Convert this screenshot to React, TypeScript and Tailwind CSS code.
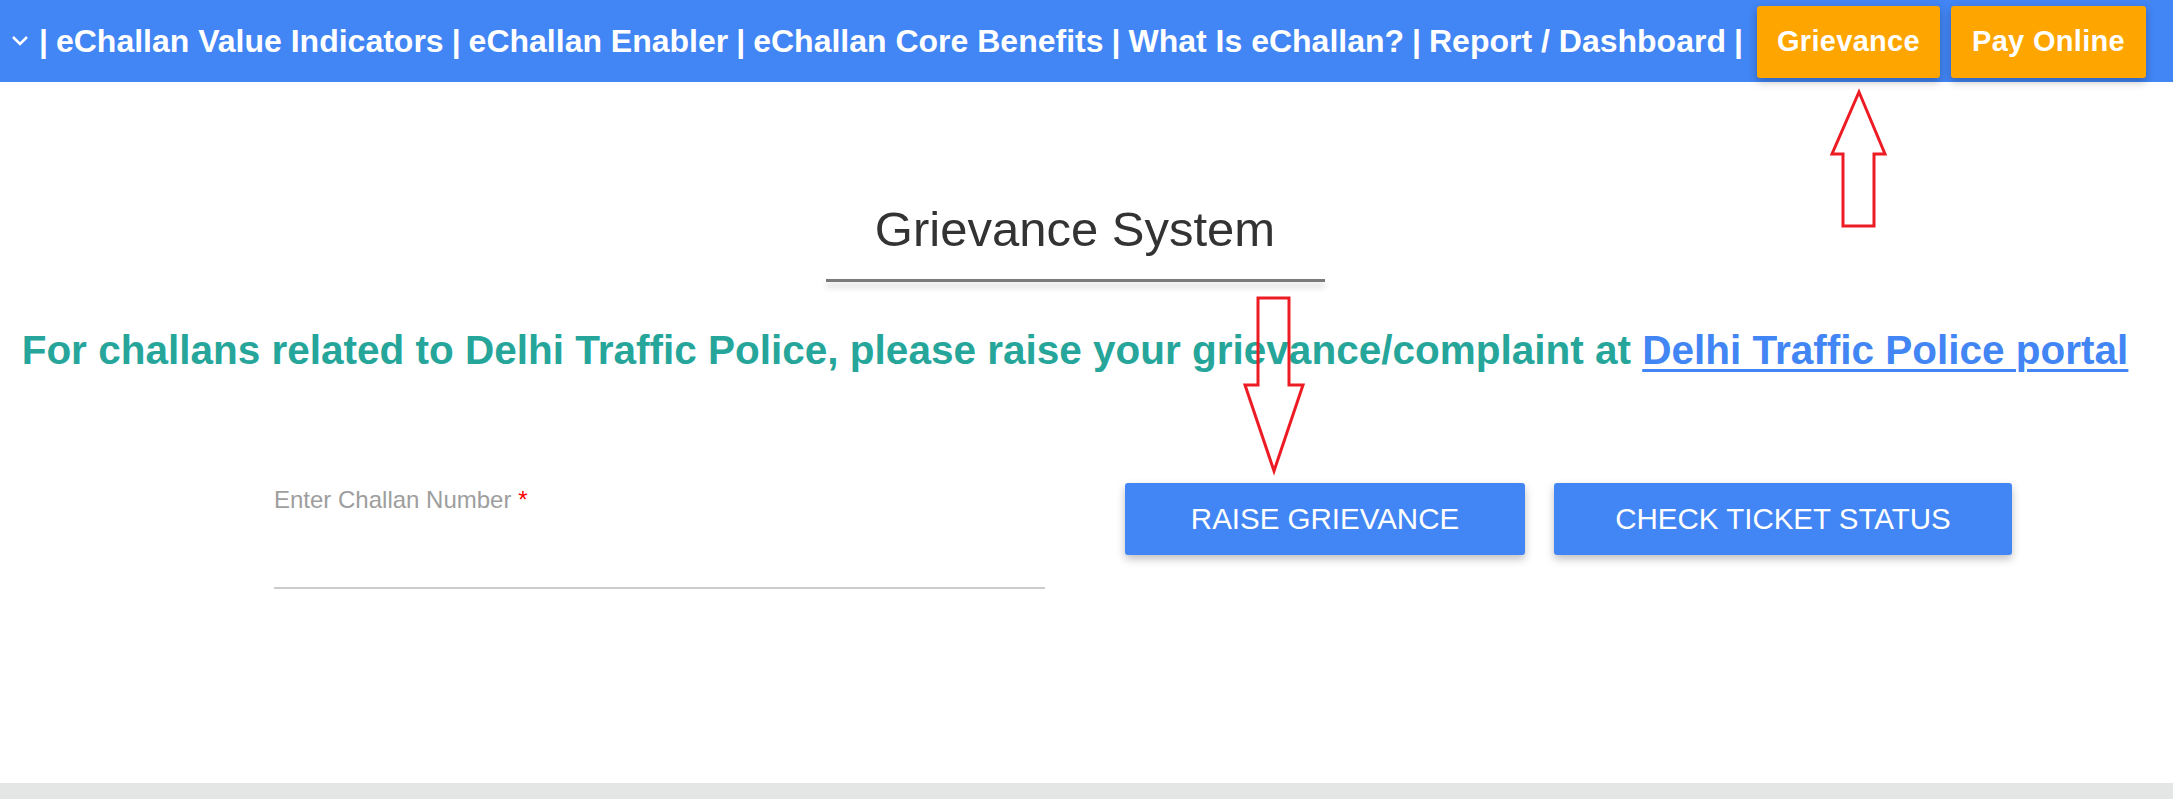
const navItems = [
  "eChallan Value Indicators",
  "eChallan Enabler",
  "eChallan Core Benefits",
  "What Is eChallan?",
  "Report / Dashboard",
];

const UpArrow = () => (
  <svg className="absolute left-[1826px] top-[88px]" width="66" height="144" viewBox="0 0 66 144">
    <polygon
      points="33,4 59,66 48,66 48,138 17,138 17,66 6,66"
      fill="none"
      stroke="#ed1c24"
      strokeWidth="3"
    />
  </svg>
);

const DownArrow = () => (
  <svg className="absolute left-[1240px] top-[294px]" width="68" height="182" viewBox="0 0 68 182">
    <polygon
      points="18,4 49,4 49,91 63,91 34,177 5,91 18,91"
      fill="none"
      stroke="#ed1c24"
      strokeWidth="3"
    />
  </svg>
);

export default function App() {
  return (
    <div className="relative flex h-[799px] w-[2173px] flex-col overflow-hidden bg-white font-['Liberation_Sans',Arial,sans-serif]">
      <header className="flex h-[82px] items-center justify-between bg-[#4285f4] pl-[11px] pr-[27px]">
        <div className="flex items-center whitespace-nowrap text-[32px] font-bold text-white">
          <svg width="18" height="12" viewBox="0 0 18 12" className="mr-[10px]">
            <path d="M2 2 L9 9 L16 2" fill="none" stroke="white" strokeWidth="2.5" />
          </svg>
          <span>|</span>
          {navItems.map((item) => (
            <span key={item}>
              <span className="px-[8px]">{item}</span>|
            </span>
          ))}
        </div>
        <div className="flex h-full items-start gap-[11px] pt-[6px]">
          <button className="h-[72px] w-[183px] rounded-[3px] bg-[#ffa500] text-[29px] font-bold tracking-[0.3px] text-white shadow-[0_4px_8px_rgba(0,0,0,0.25)]">
            Grievance
          </button>
          <button className="h-[72px] w-[195px] rounded-[3px] bg-[#ffa500] text-[29px] font-bold tracking-[0.3px] text-white shadow-[0_4px_8px_rgba(0,0,0,0.25)]">
            Pay Online
          </button>
        </div>
      </header>

      <main className="flex flex-1 flex-col items-center pr-[23px]">
        <h1 className="mt-[118px] text-[49px] leading-[59px] text-[#333]">Grievance System</h1>
        <div className="mt-[20px] h-[3px] w-[499px] bg-[#7a7a7a] shadow-[0_5px_6px_rgba(0,0,0,0.2)]" />

        <p className="mt-[44px] whitespace-nowrap text-[40.5px] font-bold leading-[48px] text-[#26a69a]">
          For challans related to Delhi Traffic Police, please raise your grievance/complaint at{" "}
          <a href="#" className="text-[#4285f4] underline decoration-[3px] underline-offset-[5px]">
            Delhi Traffic Police portal
          </a>
        </p>

        <div className="mt-[109px] ml-[274px] flex items-start self-start">
          <div className="mt-[3px] w-[771px]">
            <label className="block text-[24px] leading-[28px] text-[#9e9e9e]">
              Enter Challan Number <span className="text-[#ff0000]">*</span>
            </label>
            <input className="block h-[75px] w-full border-b-2 border-[#cccccc] outline-none" />
          </div>
          <button className="ml-[80px] h-[72px] w-[400px] rounded-[3px] bg-[#4285f4] text-[29.5px] uppercase text-white shadow-[0_4px_8px_rgba(0,0,0,0.25)]">
            Raise Grievance
          </button>
          <button className="ml-[29px] h-[72px] w-[458px] rounded-[3px] bg-[#4285f4] text-[29.5px] uppercase text-white shadow-[0_4px_8px_rgba(0,0,0,0.25)]">
            Check Ticket Status
          </button>
        </div>
      </main>

      <footer className="h-[16px] bg-[#e4e6e5]" />

      <UpArrow />
      <DownArrow />
    </div>
  );
}
